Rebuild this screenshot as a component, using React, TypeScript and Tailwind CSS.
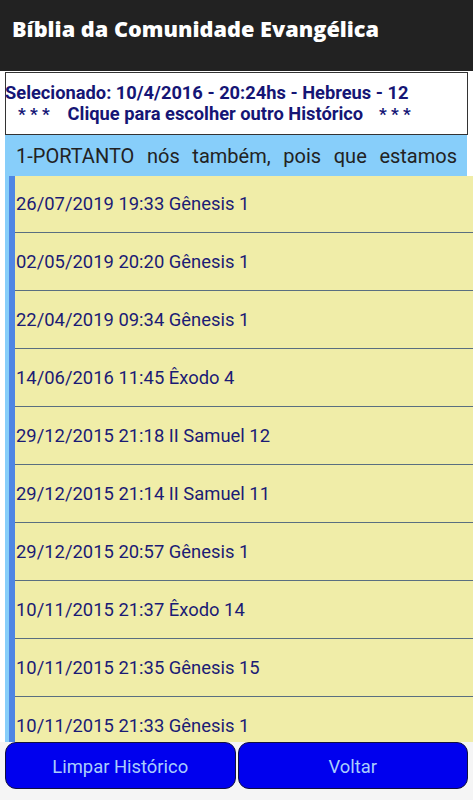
import React from "react";

const rows = [
  "26/07/2019 19:33 Gênesis 1",
  "02/05/2019 20:20 Gênesis 1",
  "22/04/2019 09:34 Gênesis 1",
  "14/06/2016 11:45 Êxodo 4",
  "29/12/2015 21:18 II Samuel 12",
  "29/12/2015 21:14 II Samuel 11",
  "29/12/2015 20:57 Gênesis 1",
  "10/11/2015 21:37 Êxodo 14",
  "10/11/2015 21:35 Gênesis 15",
  "10/11/2015 21:33 Gênesis 1",
];

export default function App() {
  return (
    <div
      className="w-[473px] h-[800px] bg-[#f5f5f5] flex flex-col overflow-hidden"
      style={{ fontFamily: "Roboto, 'Liberation Sans', sans-serif" }}
    >
      <div className="h-[71px] shrink-0 bg-[#222222] flex items-center pl-[12px]">
        <span
          className="text-white text-[21.7px] font-extrabold pb-[12px]"
          style={{ fontFamily: "'Open Sans', Lato, sans-serif" }}
        >
          Bíblia da Comunidade Evangélica
        </span>
      </div>
      <div className="bg-white flex flex-col">
        <div className="mx-[5px] mt-[1px] h-[63px] border border-[#333] bg-white flex flex-col justify-center text-[#151575] font-bold text-[18.3px] leading-[21px]">
          <div className="-ml-[1px]">Selecionado: 10/4/2016 - 20:24hs - Hebreus - 12</div>
          <div className="pl-[12px]">
            <span className="text-[17px]">* * *</span>
            <span className="ml-[18px]">Clique para escolher outro Histórico</span>
            <span className="ml-[16px] text-[17px]">* * *</span>
          </div>
        </div>
      </div>
      <div className="flex-1 min-h-0 bg-white pl-[5px] flex flex-col">
        <div className="h-[41px] shrink-0 bg-[#87cefa] mr-[6px] flex items-center pl-[11px] pr-[10px]">
          <div
            className="w-full text-[20px] text-[#222] text-justify"
            style={{ textAlignLast: "justify" }}
          >
            1-PORTANTO nós também, pois que estamos
          </div>
        </div>
        <div className="flex-1 min-h-0 flex bg-[#87cefa]">
          <div className="w-[4px] shrink-0 bg-[#87cefa]" />
          <div className="w-[6px] shrink-0 bg-[#4f86e3]" />
          <div className="flex-1 min-w-0 bg-[#f0eda8] overflow-hidden">
            {rows.map((r, i) => (
              <div
                key={i}
                className={`${
                  i === 0 ? "h-[57px]" : "h-[58px]"
                } flex items-center pl-[1px] text-[18.4px] text-[#1b1b75] border-b border-[#5a6f80]`}
              >
                {r}
              </div>
            ))}
          </div>
        </div>
      </div>
      <div className="h-[58px] shrink-0 flex gap-[2px] px-[5px] pb-[11px] bg-[#f5f5f5]">
        <button className="flex-1 h-[47px] pt-[3px] rounded-[11px] bg-[#0000ee] border border-[#101040] text-[#a9cdfc] text-[18.4px]">
          Limpar Histórico
        </button>
        <button className="flex-1 h-[47px] pt-[3px] rounded-[11px] bg-[#0000ee] border border-[#101040] text-[#a9cdfc] text-[18.4px]">
          Voltar
        </button>
      </div>
    </div>
  );
}
